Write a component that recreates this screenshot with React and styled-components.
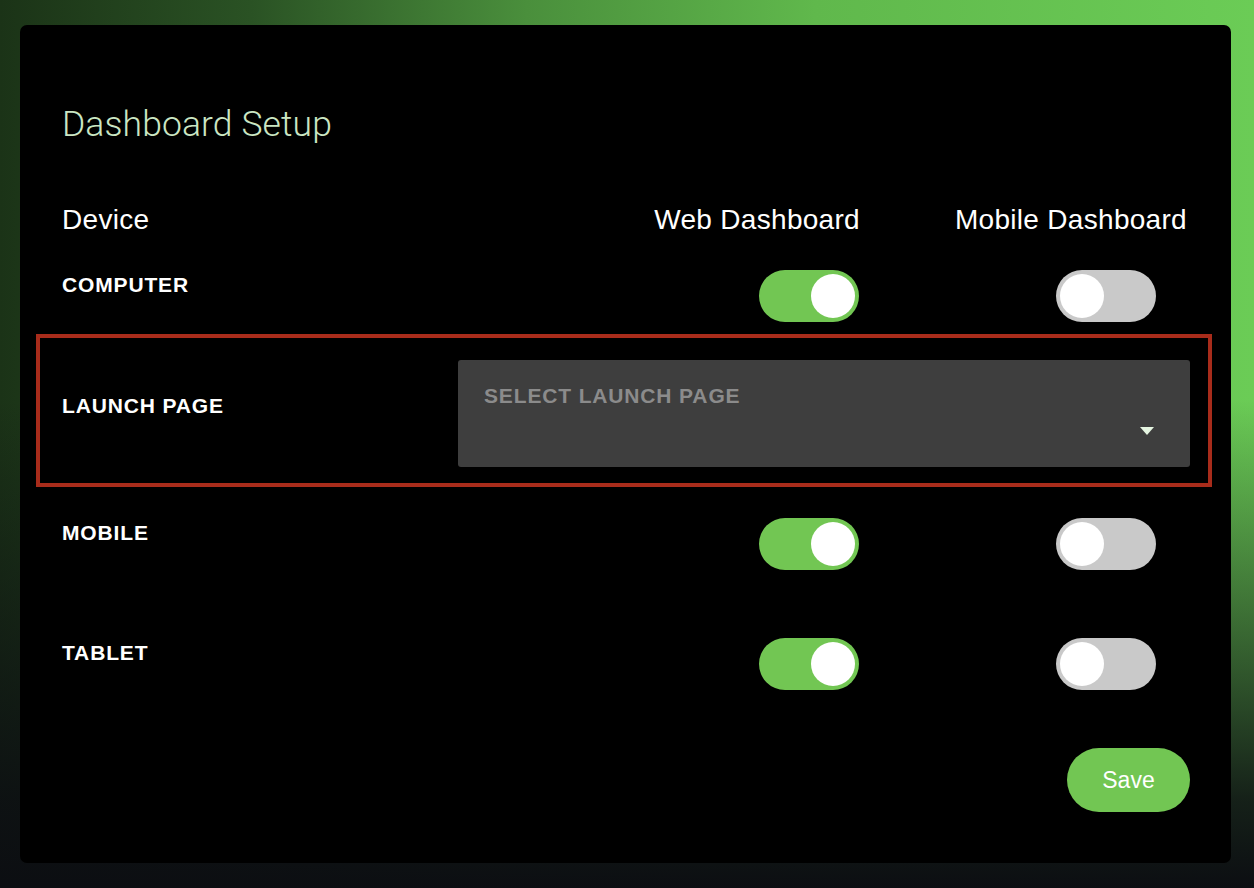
import React from "react";
import styled, { createGlobalStyle } from "styled-components";

const GlobalStyle = createGlobalStyle`
  html, body {
    margin: 0;
    padding: 0;
  }
  body {
    font-family: "Liberation Sans", Arial, sans-serif;
    background: #0c0e12;
  }
  * { box-sizing: border-box; }
`;

const Page = styled.div`
  min-height: 888px;
  padding: 25px 23px 25px 20px;
  background:
    linear-gradient(
      to bottom,
      rgba(12, 14, 18, 0) 0%,
      rgba(12, 14, 18, 0) 45%,
      rgba(12, 14, 18, 0.5) 70%,
      rgba(12, 14, 18, 0.9) 90%,
      #0c0e12 100%
    ),
    linear-gradient(
      to right,
      #1b3317 0%,
      #2a5224 20%,
      #4a8f3c 42%,
      #60b84c 65%,
      #6bcc56 100%
    );
`;

const Card = styled.div`
  background: #000;
  border-radius: 7px;
  padding: 82px 44px 51px 42px;
  display: flex;
  flex-direction: column;
`;

const Title = styled.h1`
  margin: 0;
  font-family: Roboto, "Liberation Sans", sans-serif;
  font-weight: 300;
  font-size: 35.5px;
  line-height: 35px;
  letter-spacing: 0.1px;
  color: #cbe6c3;
`;

const GridRow = styled.div`
  display: grid;
  grid-template-columns: 1fr 300px 327px;
  align-items: start;
  margin-top: ${(p) => p.$gap}px;
`;

const HeadCell = styled.div`
  font-size: 28px;
  line-height: 28px;
  letter-spacing: 0.3px;
  color: #fff;
  text-align: ${(p) => (p.$right ? "right" : "left")};
`;

const Label = styled.div`
  font-weight: 700;
  font-size: 21px;
  line-height: 21px;
  letter-spacing: 0.85px;
  color: #fff;
  padding-top: ${(p) => p.$top ?? 4}px;
`;

const ToggleCell = styled.div`
  display: flex;
  justify-content: flex-end;
  padding-right: ${(p) => p.$inset}px;
`;

const Track = styled.div`
  width: 100px;
  height: 52px;
  border-radius: 26px;
  padding: 0 4px;
  display: flex;
  align-items: center;
  justify-content: ${(p) => (p.$on ? "flex-end" : "flex-start")};
  background: ${(p) => (p.$on ? "#72c653" : "#c9c9c9")};
`;

const Knob = styled.div`
  width: 44px;
  height: 44px;
  border-radius: 50%;
  background: #fff;
`;

const LaunchRow = styled.div`
  display: flex;
  align-items: flex-start;
  margin: 12px -25px 0 -26px;
  padding: 22px 18px 16px 22px;
  border: 4px solid #a82c1b;
`;

const LaunchLabel = styled(Label)`
  flex: 0 0 396px;
`;

const Select = styled.div`
  flex: 1;
  height: 107px;
  background: #3e3e3e;
  border-radius: 3px;
  padding: 25px 36px 32px 26px;
  display: flex;
  flex-direction: column;
`;

const SelectText = styled.div`
  font-weight: 700;
  font-size: 21px;
  line-height: 21px;
  letter-spacing: 0.85px;
  color: #8b8b8b;
`;

const Caret = styled.svg`
  align-self: flex-end;
  margin-top: auto;
  display: block;
`;

const Footer = styled.div`
  display: flex;
  justify-content: flex-end;
  margin: 58px -3px 0 0;
`;

const SaveButton = styled.button`
  width: 123px;
  height: 64px;
  border: none;
  border-radius: 32px;
  background: #72c653;
  color: #fff;
  font-family: "Liberation Sans", Arial, sans-serif;
  font-size: 23px;
  cursor: pointer;
`;

function Toggle({ on }) {
  return (
    <Track $on={on}>
      <Knob />
    </Track>
  );
}

function DeviceRow({ label, web, mobile, gap }) {
  return (
    <GridRow $gap={gap}>
      <Label>{label}</Label>
      <ToggleCell $inset={1}>
        <Toggle on={web} />
      </ToggleCell>
      <ToggleCell $inset={31}>
        <Toggle on={mobile} />
      </ToggleCell>
    </GridRow>
  );
}

export default function App() {
  return (
    <>
      <GlobalStyle />
      <Page>
        <Card>
          <Title>Dashboard Setup</Title>
          <GridRow $gap={64}>
            <HeadCell>Device</HeadCell>
            <HeadCell $right>Web Dashboard</HeadCell>
            <HeadCell $right>Mobile Dashboard</HeadCell>
          </GridRow>
          <DeviceRow label="COMPUTER" web mobile={false} gap={36} />
          <LaunchRow>
            <LaunchLabel $top={35}>LAUNCH PAGE</LaunchLabel>
            <Select>
              <SelectText>SELECT LAUNCH PAGE</SelectText>
              <Caret width="14" height="8" viewBox="0 0 14 8">
                <polygon points="0,0 14,0 7,8" fill="#e6f6e2" />
              </Caret>
            </Select>
          </LaunchRow>
          <DeviceRow label="MOBILE" web mobile={false} gap={31} />
          <DeviceRow label="TABLET" web mobile={false} gap={68} />
          <Footer>
            <SaveButton>Save</SaveButton>
          </Footer>
        </Card>
      </Page>
    </>
  );
}
